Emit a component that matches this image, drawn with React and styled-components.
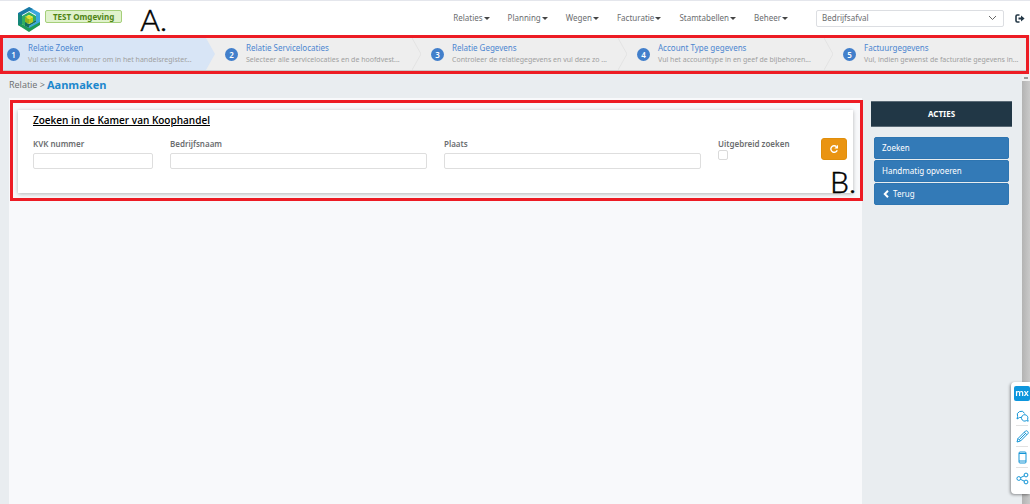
import React from "react";
import styled, { createGlobalStyle } from "styled-components";

const GlobalStyle = createGlobalStyle`
  *, *::before, *::after { box-sizing: border-box; }
  body {
    margin: 0;
    background: #e9edf0;
    color: #6b6d6f;
    font-family: "Noto Sans", "Open Sans", sans-serif;
    font-size: 8px;
    line-height: 12px;
    overflow: hidden;
  }
  button, input, select { font: inherit; color: inherit; margin: 0; }
`;

const Page = styled.div`
  display: flex;
  flex-direction: column;
  min-height: 100vh;
`;

const Header = styled.header`
  display: flex;
  align-items: center;
  height: 35px;
  padding: 0 5px 0 18px;
  background: #fff;
  border-top: 1px solid #e4e6ec;
`;

const Logo = styled.svg`
  width: 22px;
  height: 25px;
  flex: none;
  margin-top: 2px;
`;

const EnvBadge = styled.span`
  margin: 0 0 4px 5px;
  padding: 0 7px;
  border: 1px solid #a5cf7a;
  border-radius: 2px;
  background: #e0f2cc;
  color: #4f8514;
  font-weight: 700;
  line-height: 11px;
  white-space: nowrap;
`;

const Marker = styled.span`
  font-family: Lato, "Open Sans", sans-serif;
  font-weight: 300;
  font-size: 30px;
  line-height: 32px;
  color: #000;
  -webkit-text-stroke: 0.5px #000;
`;

const HeaderMarker = styled(Marker)`
  margin: 2px 0 0 18px;
`;

const Nav = styled.nav`
  display: flex;
  gap: 18px;
  margin-left: auto;
  margin-right: 28px;
`;

const NavButton = styled.button`
  display: flex;
  align-items: center;
  gap: 1px;
  padding: 0;
  border: 0;
  background: none;
  white-space: nowrap;

  &::after {
    content: "";
    border: 3px solid transparent;
    border-top-color: #444;
    border-bottom: 0;
  }
`;

const SelectWrap = styled.label`
  position: relative;
  width: 188px;
  height: 17px;
  margin-right: 11px;

  svg {
    position: absolute;
    right: 7px;
    top: 5px;
  }
`;

const Select = styled.select`
  appearance: none;
  display: block;
  width: 100%;
  height: 100%;
  padding: 0 20px 0 5px;
  border: 1px solid #dcdee2;
  border-radius: 2px;
  background: #fff;
`;

const IconButton = styled.button`
  display: flex;
  padding: 0;
  border: 0;
  background: none;
  color: #233746;
`;

const Wizard = styled.ol`
  display: grid;
  grid-template-columns: 212fr 206fr 206fr 206fr 193fr;
  height: 39px;
  margin: 0 1px 0 0;
  padding: 0;
  border: 3px solid #ed1c24;
  background: #eee;
  list-style: none;
`;

const Step = styled.li`
  display: flex;
  align-items: center;
  gap: 8px;
  position: relative;
  min-width: 0;
  padding-left: ${(p) => (p.$active ? 4 : 10)}px;
  border-bottom: 1px solid #c9c9c9;
`;

const StepShape = styled.svg`
  position: absolute;
  inset: 0;
  width: 100%;
  height: 100%;
`;

const ArrowEdge = styled.svg`
  position: absolute;
  right: 0;
  top: 0;
  width: 9px;
  height: 100%;
`;

const StepNumber = styled.span`
  position: relative;
  flex: none;
  width: 13px;
  height: 13px;
  border-radius: 50%;
  background: #427fcb;
  color: #fff;
  font-weight: 600;
  line-height: 13px;
  text-align: center;
`;

const StepText = styled.div`
  position: relative;
  padding-bottom: 1px;
  white-space: nowrap;
`;

const StepTitle = styled.div`
  color: #4c86d0;
`;

const StepHint = styled.div`
  color: #a0a0a0;
  font-size: 7px;
`;

const Body = styled.div`
  display: flex;
  flex: 1;
`;

const Main = styled.main`
  display: flex;
  flex: 1;
  flex-direction: column;
  padding-left: 9px;
`;

const Breadcrumb = styled.div`
  display: flex;
  align-items: center;
  gap: 2px;
  height: 24px;
  padding-bottom: 2px;
  font-family: "Open Sans", "Noto Sans", sans-serif;
  font-size: 9px;

  a { color: inherit; text-decoration: none; }
  strong { color: #1c87cd; font-size: 11px; }
`;

const Content = styled.div`
  flex: 1;
  margin-right: -1px;
  padding: 2px 0 0 1px;
  background: linear-gradient(to right, #f8f9fb calc(100% - 1px), transparent 0);
`;

const Highlight = styled.div`
  position: relative;
  padding: 7px 7px 5px 5px;
  border: 3px solid #ed1c24;
`;

const CornerMarker = styled(Marker)`
  position: absolute;
  right: 4px;
  bottom: 1px;
`;

const Card = styled.form`
  height: 83px;
  padding: 3px 6px 0 15px;
  background: #fff;
  box-shadow: 0 1px 4px rgba(0, 0, 0, 0.28);
`;

const CardTitle = styled.h2`
  margin: 0;
  color: #000;
  font-family: "Open Sans", "Noto Sans", sans-serif;
  font-size: 10px;
  font-weight: 600;
  line-height: 14px;
  text-decoration: underline;
`;

const Fields = styled.div`
  display: grid;
  grid-template-columns: 120fr 257fr 257fr 86fr 26px;
  column-gap: 17px;
  align-items: start;
  margin-top: 11px;
`;

const Field = styled.label`
  display: block;
  font-weight: 600;
  white-space: nowrap;
`;

const TextInput = styled.input`
  display: block;
  width: 100%;
  height: 16px;
  margin-top: 3px;
  padding: 0 4px;
  border: 1px solid #dedede;
  border-radius: 2px;
  background: #fff;
`;

const Checkbox = styled.input`
  appearance: none;
  display: block;
  width: 10px;
  height: 10px;
  border: 1px solid #dadada;
  border-radius: 2px;
  background: #fff;
`;

const ResetButton = styled.button`
  display: flex;
  align-items: center;
  justify-content: center;
  width: 26px;
  height: 22px;
  border: 1px solid #e08e0b;
  border-radius: 3px;
  background: #ea9411;
  color: #fff;
`;

const Sidebar = styled.aside`
  flex: none;
  width: 141px;
  margin: 27px 10px 0 9px;
`;

const SidebarTitle = styled.h2`
  margin: 0 0 10px;
  border: 1px solid #5a6a76;
  border-width: 1px 0;
  background: #213746;
  color: #fff;
  font-size: 8px;
  line-height: 24px;
  text-align: center;
`;

const Actions = styled.div`
  display: flex;
  flex-direction: column;
  gap: 1px;
  padding: 0 3px;
`;

const ActionButton = styled.button`
  display: flex;
  align-items: center;
  gap: 3px;
  height: 22px;
  padding: 0 7px;
  border: 1px solid #2e75b1;
  border-radius: 2px;
  background: #337ab7;
  color: #fff;
`;

const ScrollTrack = styled.div`
  flex: none;
  width: 8px;
  background: linear-gradient(to right, #b3b3b3, #c9c9c9);

  &::before {
    content: "";
    display: block;
    height: 7px;
    background: #f0f0f0 linear-gradient(#999, #999) center / 4px 2px no-repeat;
  }
`;

const Toolbox = styled.div`
  position: fixed;
  right: 0;
  bottom: 10px;
  display: flex;
  flex-direction: column;
  align-items: center;
  width: 19px;
  height: 112px;
  padding: 4px 0 0 3px;
  border-radius: 4px 0 0 4px;
  background: #fff;
  box-shadow: -1px 1px 3px rgba(0, 0, 0, 0.4);
`;

const MxLogo = styled.span`
  width: 16px;
  height: 15px;
  margin-bottom: 4px;
  border-radius: 2px;
  background: #0d96dd;
  color: #fff;
  font-size: 9px;
  font-weight: 600;
  line-height: 13px;
  text-align: center;
`;

const Tool = styled.button`
  display: flex;
  align-items: center;
  justify-content: center;
  width: 12px;
  height: 21px;
  padding: 0;
  border: 0;
  border-bottom: 1px solid #e2e2e2;
  background: none;
  color: #1495d6;

  &:last-child { border-bottom: 0; }

  svg {
    flex: none;
    width: 13px;
    height: 13px;
    fill: none;
    stroke: currentColor;
  }
`;

const MENU = ["Relaties", "Planning", "Wegen", "Facturatie", "Stamtabellen", "Beheer"];

const STEPS = [
  ["Relatie Zoeken", "Vul eerst Kvk nummer om in het handelsregister..."],
  ["Relatie Servicelocaties", "Selecteer alle servicelocaties en de hoofdvest..."],
  ["Relatie Gegevens", "Controleer de relatiegegevens en vul deze zo ..."],
  ["Account Type gegevens", "Vul het accounttype in en geef de bijbehoren..."],
  ["Factuurgegevens", "Vul, indien gewenst de facturatie gegevens in..."],
];

function BrandLogo() {
  return (
    <Logo viewBox="0 0 22 25" aria-hidden="true">
      <path d="M11 0 L22 6 V17 L11 23 V19 L18 15 V8 L11 4 Z" fill="#3ba7df" />
      <path d="M11 0 L0 6 V12 L4 10 V8 L15 2 Z" fill="#1879a6" />
      <path d="M0 7 L4 8 V20 L0 18 Z" fill="#14857a" />
      <path d="M0 18 L4 17 L11 21 L22 15 V18 L11 25 Z" fill="#1d9a57" />
      <path d="M4 9 L11 5 L18 9 V13 L15 15 V10 L11 8 L7 10 V19 L4 17 Z" fill="#2fae62" />
      <path d="M7 10 L9 9 V16 L11 17 L18 13 V15 L11 19 V21 L7 19 Z" fill="#13705f" />
      <path d="M11 8 L15 10 L11 12 L7 10 Z" fill="#e0e32c" />
      <path d="M7 10 L11 12 V17 L7 15 Z" fill="#8fb51e" />
      <path d="M15 10 L11 12 V17 L15 15 Z" fill="#b8cb1b" />
    </Logo>
  );
}

export default function App() {
  return (
    <Page>
      <GlobalStyle />
      <Header>
        <BrandLogo />
        <EnvBadge>TEST Omgeving</EnvBadge>
        <HeaderMarker>A.</HeaderMarker>
        <Nav>
          {MENU.map((item) => (
            <NavButton key={item} type="button">{item}</NavButton>
          ))}
        </Nav>
        <SelectWrap>
          <Select aria-label="Afdeling" defaultValue="Bedrijfsafval">
            <option>Bedrijfsafval</option>
          </Select>
          <svg width="9" height="6" viewBox="0 0 9 6" fill="none" stroke="#666" aria-hidden="true">
            <path d="M1 1 L4.5 4.5 L8 1" />
          </svg>
        </SelectWrap>
        <IconButton type="button" aria-label="Uitloggen">
          <svg width="10" height="9" viewBox="0 0 10 9" aria-hidden="true">
            <path d="M4.5 1 H2.2 Q1 1 1 2.2 V6.8 Q1 8 2.2 8 H4.5" fill="none" stroke="currentColor" strokeWidth="1.6" />
            <path d="M3.5 3.4 H6 V1.6 L9.6 4.5 L6 7.4 V5.6 H3.5 Z" fill="currentColor" />
          </svg>
        </IconButton>
      </Header>

      <Wizard>
        {STEPS.map(([title, hint], i) => (
          <Step key={title} $active={i === 0}>
            {i === 0 && (
              <StepShape viewBox="0 0 212 32" preserveAspectRatio="none" aria-hidden="true">
                <path d="M0 0 H203 L212 16 L203 32 H0 Z" fill="#d8e5f6" />
              </StepShape>
            )}
            {i > 0 && i < STEPS.length - 1 && (
              <ArrowEdge viewBox="0 0 9 32" preserveAspectRatio="none" aria-hidden="true">
                <path d="M0 0 L9 16 L0 32" fill="none" stroke="#e3e3e3" />
              </ArrowEdge>
            )}
            <StepNumber>{i + 1}</StepNumber>
            <StepText>
              <StepTitle>{title}</StepTitle>
              <StepHint>{hint}</StepHint>
            </StepText>
          </Step>
        ))}
      </Wizard>

      <Body>
        <Main>
          <Breadcrumb>
            <span><a href="#relatie">Relatie</a> &gt;</span>
            <strong>Aanmaken</strong>
          </Breadcrumb>
          <Content>
            <Highlight>
              <Card>
                <CardTitle>Zoeken in de Kamer van Koophandel</CardTitle>
                <Fields>
                  <Field>KVK nummer<TextInput type="text" /></Field>
                  <Field>Bedrijfsnaam<TextInput type="text" /></Field>
                  <Field>Plaats<TextInput type="text" /></Field>
                  <Field>Uitgebreid zoeken<Checkbox type="checkbox" /></Field>
                  <ResetButton type="button" aria-label="Opnieuw">
                    <svg width="10" height="10" viewBox="0 0 10 10" aria-hidden="true">
                      <path d="M7.4 2.6 A3.3 3.3 0 1 0 8.2 6.2" fill="none" stroke="currentColor" strokeWidth="1.4" />
                      <path d="M9 0.8 V4.4 H5.4 Z" fill="currentColor" />
                    </svg>
                  </ResetButton>
                </Fields>
              </Card>
              <CornerMarker>B.</CornerMarker>
            </Highlight>
          </Content>
        </Main>
        <Sidebar>
          <SidebarTitle>ACTIES</SidebarTitle>
          <Actions>
            <ActionButton type="button">Zoeken</ActionButton>
            <ActionButton type="button">Handmatig opvoeren</ActionButton>
            <ActionButton type="button">
              <svg width="8" height="8" viewBox="0 0 8 8" fill="none" stroke="currentColor" strokeWidth="2" aria-hidden="true">
                <path d="M6 0.8 L2.8 4 L6 7.2" />
              </svg>
              Terug
            </ActionButton>
          </Actions>
        </Sidebar>
        <ScrollTrack />
      </Body>

      <Toolbox>
        <MxLogo>mx</MxLogo>
        <Tool type="button" aria-label="Feedback">
          <svg viewBox="0 0 13 13">
            <path d="M5 8.5 H3.5 L1 10 L1.6 7.6 A3.8 3.8 0 1 1 8.6 4.5" />
            <path d="M11.6 10.2 L12.2 12.2 L10.4 11.6 A3.2 3.2 0 1 1 11.6 10.2 Z" />
          </svg>
        </Tool>
        <Tool type="button" aria-label="Bewerken">
          <svg viewBox="0 0 13 13">
            <path d="M1 12 L2 8.5 L9.5 1 Q10.5 0.3 11.6 1.4 Q12.7 2.5 12 3.5 L4.5 11 Z M8.3 2.2 L10.8 4.7 M2 8.5 L4.5 11 M3.3 9.7 L9.6 3.4" />
          </svg>
        </Tool>
        <Tool type="button" aria-label="Mobiele weergave">
          <svg viewBox="0 0 13 13">
            <rect x="3" y="1" width="7" height="11" rx="1" />
            <path d="M3 2.5 H10 M3 10 H10" />
          </svg>
        </Tool>
        <Tool type="button" aria-label="Delen">
          <svg viewBox="0 0 13 13">
            <circle cx="2.8" cy="6.5" r="1.9" />
            <circle cx="10" cy="3" r="1.9" />
            <circle cx="10" cy="10" r="1.9" />
            <path d="M4.5 5.7 L8.3 3.8 M4.5 7.3 L8.3 9.2" />
          </svg>
        </Tool>
      </Toolbox>
    </Page>
  );
}
